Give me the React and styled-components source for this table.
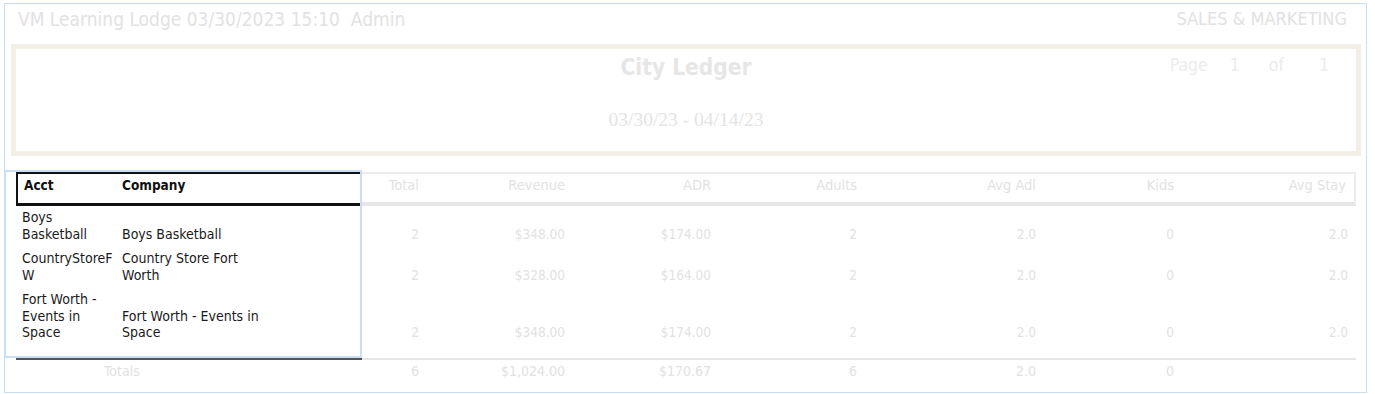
import React from "react";
import styled, { createGlobalStyle } from "styled-components";

const Global = createGlobalStyle`
  html, body { margin: 0; padding: 0; background: #ffffff; }
  body { font-family: "DejaVu Sans Condensed", "DejaVu Sans", sans-serif; font-stretch: condensed; }
`;

const FADED = "#e2e2e2";
const COLS = "100px 246px 63px 146px 146px 146px 179px 138px 176px";

const Frame = styled.div`
  margin: 3px 0 0 4px;
  width: 1363px;
  height: 390px;
  box-sizing: border-box;
  border: 1px solid #c9dff6;
  display: flex;
  flex-direction: column;
`;

const TopBar = styled.div`
  display: flex;
  justify-content: space-between;
  align-items: center;
  padding: 4px 19px 0 13px;
  height: 22px;
  color: ${FADED};
`;

const TopText = styled.span`
  font-size: ${(p) => p.$size}px;
  line-height: 22px;
  white-space: pre;
`;

const TitleBox = styled.div`
  margin: 14px 5px 0 6px;
  height: 112px;
  box-sizing: border-box;
  border: 5px solid #f2f0e6;
  display: grid;
  grid-template-columns: 1fr auto 1fr;
  padding-top: 4px;
`;

const TitleCenter = styled.div`
  grid-column: 2;
  display: flex;
  flex-direction: column;
  align-items: center;
`;

const Title = styled.div`
  font-size: 22.5px;
  font-weight: bold;
  line-height: 28px;
  color: #e6e6e6;
`;

const DateRange = styled.div`
  margin-top: 27px;
  font-family: "Liberation Serif", serif;
  font-size: 19.5px;
  line-height: 24px;
  color: #e4e4e4;
`;

const PageInfo = styled.div`
  grid-column: 3;
  justify-self: end;
  display: flex;
  padding-right: 27px;
  font-size: 17.5px;
  line-height: 24px;
  color: #ececec;
`;

const PageItem = styled.span`
  margin-left: ${(p) => p.$gap || 0}px;
`;

const TableWrap = styled.div`
  position: relative;
  margin: 16px 10px 0 11px;
`;

const Row = styled.div`
  display: grid;
  grid-template-columns: ${COLS};
  align-items: ${(p) => (p.$stretch ? "stretch" : "end")};
`;

const HeadCell = styled.div`
  box-sizing: border-box;
  height: 34px;
  padding: 3px ${(p) => (p.$last ? 8 : 6)}px 0 6px;
  line-height: 16px;
  text-align: ${(p) => p.$align || "left"};
  font-size: ${(p) => (p.$dark ? 13.5 : 14.5)}px;
  font-weight: ${(p) => (p.$dark ? "bold" : "normal")};
  color: ${(p) => (p.$dark ? "#111" : FADED)};
  border-top: ${(p) => (p.$dark ? "2px solid #111" : "2px solid #ececec")};
  border-bottom: ${(p) => (p.$dark ? "3px solid #111" : "4px solid #e6e6e6")};
  border-left: ${(p) => (p.$first ? "2px solid #111" : "none")};
  border-right: ${(p) => (p.$last ? "2px solid #ececec" : "none")};
`;

const Cell = styled.div`
  box-sizing: border-box;
  padding: 3px ${(p) => (p.$last ? 8 : p.$tight ? 0 : 6)}px 5px 6px;
  font-size: ${(p) => (p.$dark ? 14 : 13.5)}px;
  line-height: 16.5px;
  text-align: ${(p) => p.$align || "left"};
  color: ${(p) => (p.$dark ? "#1a1a1a" : FADED)};
  word-break: ${(p) => (p.$tight ? "break-all" : "normal")};
`;

const CompanyText = styled.div`
  max-width: 150px;
`;

const Body = styled.div`
  padding-bottom: 12px;
`;

const TotalCell = styled.div`
  box-sizing: border-box;
  padding: 2px ${(p) => (p.$last ? 8 : 6)}px 0 ${(p) => p.$indent || 6}px;
  font-size: 14px;
  line-height: 18px;
  text-align: ${(p) => p.$align || "left"};
  color: ${FADED};
  border-top: ${(p) => (p.$dark ? "2px solid #555" : "2px solid #e6e6e6")};
  grid-column: ${(p) => p.$span || "auto"};
`;

const Highlight = styled.div`
  position: absolute;
  left: -12px;
  top: -2px;
  width: 358px;
  height: 188px;
  box-sizing: border-box;
  border: 2px solid #c8def5;
  pointer-events: none;
`;

const headers = ["Total", "Revenue", "ADR", "Adults", "Avg Adl", "Kids", "Avg Stay"];

const rows = [
  { acct: "Boys Basketball", company: "Boys Basketball", vals: ["2", "$348.00", "$174.00", "2", "2.0", "0", "2.0"] },
  { acct: "CountryStoreFW", company: "Country Store Fort Worth", vals: ["2", "$328.00", "$164.00", "2", "2.0", "0", "2.0"] },
  { acct: "Fort Worth - Events in Space", company: "Fort Worth - Events in Space", vals: ["2", "$348.00", "$174.00", "2", "2.0", "0", "2.0"] },
];

const totals = ["6", "$1,024.00", "$170.67", "6", "2.0", "0", ""];

export default function App() {
  return (
    <>
      <Global />
      <Frame>
        <TopBar>
          <TopText $size={19}>{"VM Learning Lodge 03/30/2023 15:10  Admin"}</TopText>
          <TopText $size={18}>SALES &amp; MARKETING</TopText>
        </TopBar>
        <TitleBox>
          <TitleCenter>
            <Title>City Ledger</Title>
            <DateRange>03/30/23 - 04/14/23</DateRange>
          </TitleCenter>
          <PageInfo>
            <PageItem>Page</PageItem>
            <PageItem $gap={22}>1</PageItem>
            <PageItem $gap={29}>of</PageItem>
            <PageItem $gap={35}>1</PageItem>
          </PageInfo>
        </TitleBox>
        <TableWrap>
          <Row>
            <HeadCell $dark $first>Acct</HeadCell>
            <HeadCell $dark>Company</HeadCell>
            {headers.map((h, i) => (
              <HeadCell key={h} $align="right" $last={i === headers.length - 1}>{h}</HeadCell>
            ))}
          </Row>
          <Body>
            {rows.map((r) => (
              <Row key={r.acct}>
                <Cell $dark $tight={r.acct === "CountryStoreFW"}>{r.acct}</Cell>
                <Cell $dark><CompanyText>{r.company}</CompanyText></Cell>
                {r.vals.map((v, i) => (
                  <Cell key={i} $align="right" $last={i === r.vals.length - 1}>{v}</Cell>
                ))}
              </Row>
            ))}
          </Body>
          <Row $stretch>
            <TotalCell $dark $span="span 2" $indent={88}>Totals</TotalCell>
            {totals.map((v, i) => (
              <TotalCell key={i} $align="right" $last={i === totals.length - 1}>{v}</TotalCell>
            ))}
          </Row>
          <Highlight />
        </TableWrap>
      </Frame>
    </>
  );
}
